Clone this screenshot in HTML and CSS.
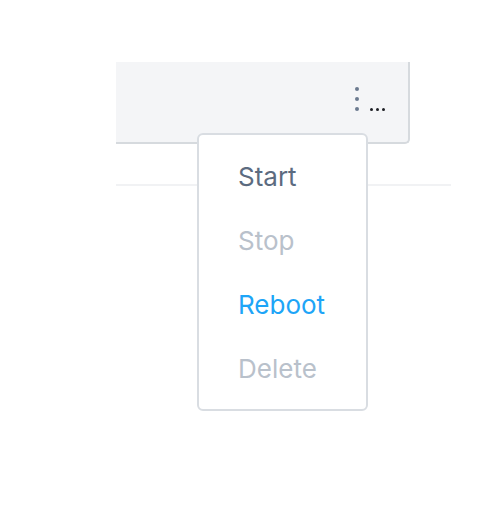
FILE: index.html
```html
<!DOCTYPE html>
<html>
<head>
<meta charset="utf-8">
<link rel="stylesheet" href="styles.css">
</head>
<body>
<div class="stage">
  <div class="card">
    <div class="actions">
      <span class="kebab"><i></i><i></i><i></i></span>
      <span class="more"><i></i><i></i><i></i></span>
    </div>
  </div>
  <div class="divider"></div>
  <ul class="menu">
    <li class="item active">Start</li>
    <li class="item disabled">Stop</li>
    <li class="item link">Reboot</li>
    <li class="item disabled">Delete</li>
  </ul>
</div>
</body>
</html>
```
FILE: styles.css
```css
html, body {
  margin: 0;
  padding: 0;
  background: #ffffff;
}
body {
  font-family: "Inter", "Lato", sans-serif;
}
.stage {
  position: relative;
  padding-top: 62px;
  padding-left: 116px;
  height: 451px;
}
.card {
  width: 292px;
  height: 80px;
  background: #f4f5f7;
  border-right: 2px solid #d6dade;
  border-bottom: 2px solid #d6dade;
  border-bottom-right-radius: 5px;
  display: flex;
  justify-content: flex-end;
  align-items: flex-start;
}
.actions {
  display: flex;
  align-items: flex-end;
  margin-top: 25px;
  margin-right: 22px;
  gap: 11px;
}
.kebab {
  display: flex;
  flex-direction: column;
  gap: 6px;
}
.kebab i {
  display: block;
  width: 4px;
  height: 4px;
  border-radius: 50%;
  background: #6b7a8f;
}
.more {
  display: flex;
  gap: 3px;
  padding-right: 1px;
}
.more i {
  display: block;
  width: 3px;
  height: 3px;
  border-radius: 50%;
  background: #1d1f24;
}
.divider {
  margin-top: 40px;
  width: 335px;
  height: 2px;
  background: #f1f2f4;
}
.menu {
  position: absolute;
  left: 197px;
  top: 133px;
  width: 171px;
  height: 278px;
  margin: 0;
  padding: 10px 0 0 0;
  list-style: none;
  background: #ffffff;
  border: 2px solid #d9dde2;
  border-radius: 6px;
  box-sizing: border-box;
}
.item {
  height: 64px;
  line-height: 64px;
  padding-left: 39px;
  font-size: 26px;
  font-weight: 400;
}
.item.active { color: #5c6b80; }
.item.disabled { color: #b9c1cb; }
.item.link { color: #1ea5f7; }
```
